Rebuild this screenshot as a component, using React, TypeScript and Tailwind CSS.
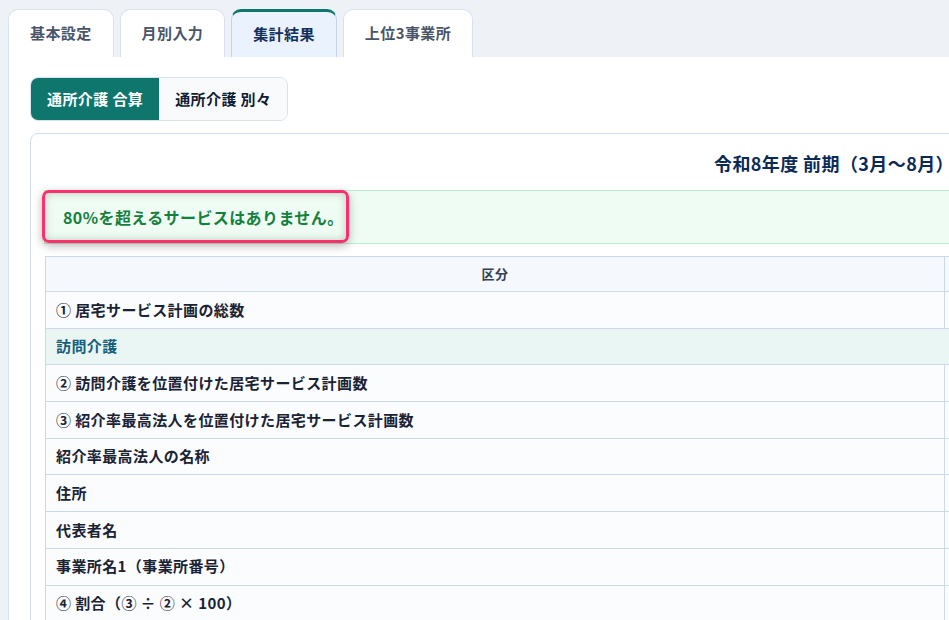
const tabs = ["基本設定", "月別入力", "集計結果", "上位3事業所"];

const rows: { label: string; section?: boolean }[] = [
  { label: "① 居宅サービス計画の総数" },
  { label: "訪問介護", section: true },
  { label: "② 訪問介護を位置付けた居宅サービス計画数" },
  { label: "③ 紹介率最高法人を位置付けた居宅サービス計画数" },
  { label: "紹介率最高法人の名称" },
  { label: "住所" },
  { label: "代表者名" },
  { label: "事業所名1（事業所番号）" },
  { label: "④ 割合（③ ÷ ② × 100）" },
];

export default function App() {
  return (
    <div className="w-[949px] h-[620px] overflow-hidden bg-[#eef2f7] tracking-[0.025em] font-['Noto_Sans_CJK_JP','Noto_Sans',sans-serif]">
      <div className="w-[1680px] pl-[8px] pt-[9px]">
        {/* Tabs */}
        <div className="flex gap-[6px]">
          {tabs.map((t, i) =>
            i === 2 ? (
              <div
                key={t}
                className="h-[48px] px-[21px] flex items-center rounded-t-[10px] border border-b-0 border-[#c3d5ee] border-t-[3px] border-t-[#0f766e] bg-[#eaf2fd] text-[15px] font-bold text-[#12305c]"
              >
                {t}
              </div>
            ) : (
              <div
                key={t}
                className="h-[48px] px-[21px] flex items-center rounded-t-[10px] border border-b-0 border-[#d8e2ee] bg-white text-[15px] font-bold text-[#4a5568]"
              >
                {t}
              </div>
            )
          )}
        </div>

        {/* Panel */}
        <div className="bg-white border-l border-[#d8e2ee] pl-[21px] pt-5 pb-10">
          <div className="inline-flex h-[44px] rounded-lg border border-[#d8e2ee] overflow-hidden text-[15px] font-bold">
            <div className="px-[16px] flex items-center bg-[#0f766e] text-white">通所介護 合算</div>
            <div className="px-[16px] flex items-center bg-[#f8fafc] text-[#0f1d33]">通所介護 別々</div>
          </div>

          {/* Card */}
          <div className="mt-3 w-[1600px] rounded-lg border border-[#d3deea] bg-white px-[13px] pt-[13px] pb-6">
            <div className="h-[32px] mb-[11px] pl-[8px] flex items-center justify-center text-[18px] font-bold text-[#0c2a57]">
              令和8年度 前期（3月～8月）
            </div>

            <div className="relative">
              <div className="h-[54px] flex items-center pl-[18px] bg-[#effcf3] border border-[#bbf0cc] text-[16px] font-bold text-[#15803d]">
                80%を超えるサービスはありません。
              </div>
              <div className="absolute -left-[2px] top-0 w-[307px] h-[53px] rounded-[7px] border-[3px] border-[#ff2e6d] shadow-[0_3px_10px_rgba(0,0,0,0.28),inset_0_0_8px_rgba(0,40,20,0.22)]" />
            </div>

            <table className="mt-3 ml-px w-[1571px] border-collapse text-[15px] font-bold text-[#1a2333]">
              <thead>
                <tr className="h-[35px] bg-[#f5f8fc]">
                  <th className="w-[899px] border border-[#cbd9e8] text-[13px] font-bold text-[#334155]">区分</th>
                  <th className="border border-[#cbd9e8]"></th>
                </tr>
              </thead>
              <tbody>
                {rows.map((r) =>
                  r.section ? (
                    <tr key={r.label} className="h-[36.7px] bg-[#eaf6f4]">
                      <td colSpan={2} className="border border-[#cbd9e8] px-[10px] text-left text-[#14607d]">
                        {r.label}
                      </td>
                    </tr>
                  ) : (
                    <tr key={r.label} className="h-[36.7px] bg-[#fafcfe]">
                      <td className="border border-[#cbd9e8] px-[10px] text-left">{r.label}</td>
                      <td className="border border-[#cbd9e8]"></td>
                    </tr>
                  )
                )}
              </tbody>
            </table>
          </div>
        </div>
      </div>
    </div>
  );
}
